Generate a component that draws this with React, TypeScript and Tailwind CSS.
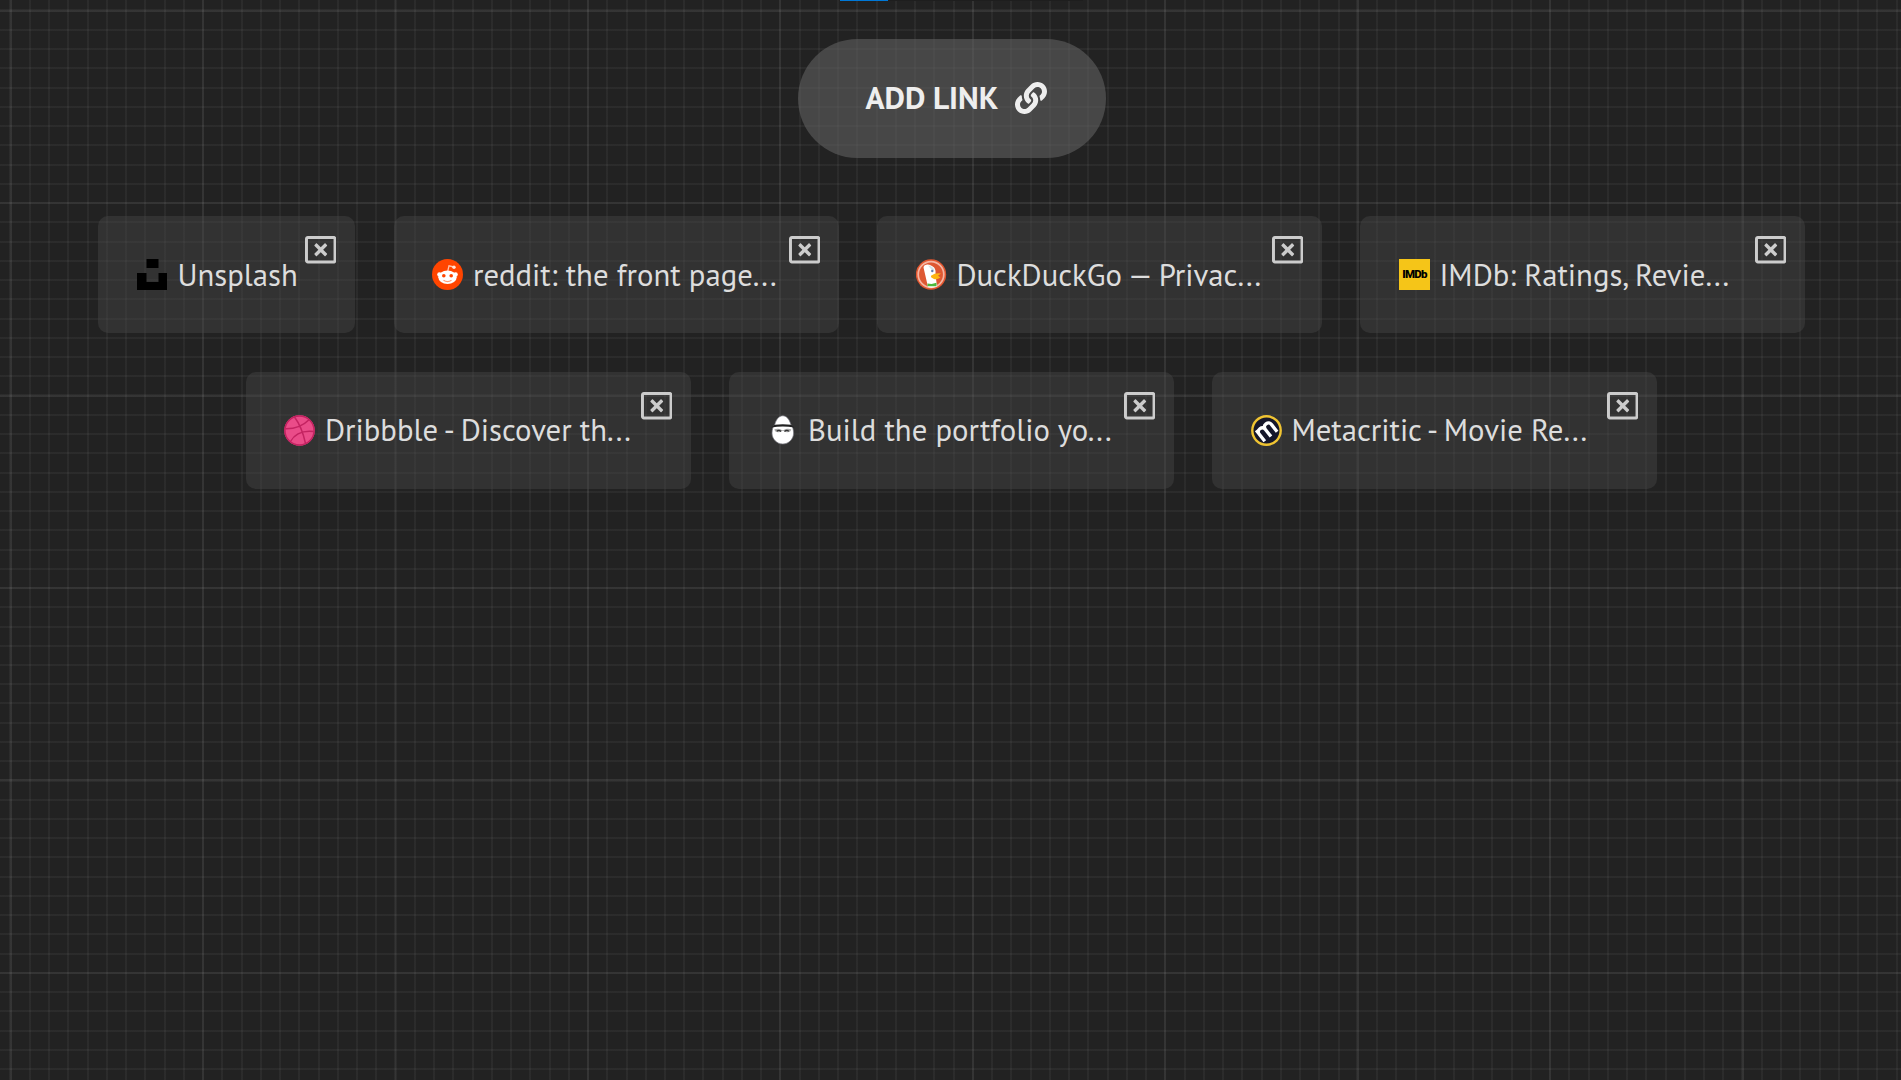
import type { ReactNode } from "react";
import { FaLink, FaRegWindowClose } from "react-icons/fa";

const iconClass = "block h-[31px] w-[31px] shrink-0";

const Unsplash = () => (
  <svg viewBox="0 0 31 31" className={iconClass}>
    <path d="M9.5 0h12v9h-12zM0 14h9.5v9h12v-9H30v17H0z" fill="#000" />
  </svg>
);

const Reddit = () => (
  <svg viewBox="0 0 31 31" className={iconClass}>
    <circle cx="15.5" cy="15.5" r="15.5" fill="#ff4500" />
    <path d="M15.8 12 17 6.8l5 1.2" fill="none" stroke="#ffc4ae" strokeWidth="1.3" />
    <circle cx="22" cy="8.2" r="1.7" fill="#ffe3d8" />
    <circle cx="7.4" cy="15.4" r="2.2" fill="#fff" />
    <circle cx="23.6" cy="15.4" r="2.2" fill="#fff" />
    <ellipse cx="15.5" cy="18.2" rx="9.2" ry="6.8" fill="#fff" />
    <circle cx="11.8" cy="16.8" r="1.8" fill="#ff4500" />
    <circle cx="19.2" cy="16.8" r="1.8" fill="#ff4500" />
    <path d="M11.5 21.3q4 2.6 8 0" fill="none" stroke="#ff9d79" strokeWidth="1.3" />
  </svg>
);

const DuckDuckGo = () => (
  <svg viewBox="0 0 31 31" className={iconClass}>
    <circle cx="15" cy="15.5" r="15.2" fill="#e2562f" />
    <circle cx="15" cy="15.5" r="12.8" fill="#de5833" stroke="#f5b5a2" strokeWidth="1.7" />
    <path d="M7.5 8.5C8 5 12.5 5 15 6.5c4 1.5 5 4.5 4.5 9l1.5 12q-5 2-9 .5z" fill="#fff" />
    <path d="M12 6.5q4 0 6.5 4.5l-2 1z" fill="#d5e4e8" />
    <circle cx="16.3" cy="12" r="1.2" fill="#5f7fae" />
    <path d="M15 16.8q4-3 10-2.3l-3 2.2 2.5 1.8q-4 2.8-7 1.2-3-1-2.5-2.9" fill="#fdb512" />
    <path d="m11.5 24.5 4 .6 5-1.3v3.4h-9z" fill="#4cba3c" />
  </svg>
);

const Imdb = () => (
  <span className="flex h-[31px] w-[31px] shrink-0 items-center justify-center bg-[#f5c518] font-['Roboto',sans-serif] text-[11.5px] leading-none font-black tracking-[-0.7px] text-black">
    IMDb
  </span>
);

const Dribbble = () => (
  <svg viewBox="0 0 31 31" className={iconClass}>
    <circle cx="15.5" cy="15.5" r="15.2" fill="#ea4c89" />
    <g fill="none" stroke="#c32361" strokeWidth="1.5">
      <circle cx="15.5" cy="15.5" r="14.6" />
      <path d="M10.5 2q7.5 10 11 26.5M1.5 13.8Q16 14 25 4.8M6.5 26.5Q13 14.8 29.5 16.5" />
    </g>
  </svg>
);

const Portfolio = () => (
  <svg viewBox="-1.8 0 31 31" className={iconClass}>
    <path d="M14 .8c4 0 6.5 3.7 7.9 8.2 2 2.5 2.8 6 2.9 9 0 6-4.8 11-10.8 11S3.2 24 3.2 18c.1-3 .9-6.5 2.9-9C7.5 4.5 10 .8 14 .8" fill="#fff" stroke="#77777f" strokeWidth=".7" />
    <path d="M5.5 9.8q8.5-1.3 17 0l3 2.7q-11.5-2-23 0z" fill="#222" />
    <path d="M5.5 14.3q4.5-1.6 7.5.8h2q3-2.400 7.500-.8-.5 3-3.800 3-2.700 0-4-1.600h-1.400q-1.300 1.600-4 1.600-3.300 0-3.800-3" fill="#aaa" />
    <path d="M8 16.2q2-1.8 4.3.2M15.7 16.4q2.3-2 4.3-.2" fill="none" stroke="#333" strokeWidth="1.3" />
  </svg>
);

const Metacritic = () => (
  <svg viewBox="0 0 31 31" className={iconClass}>
    <circle cx="15.5" cy="15.5" r="14.2" fill="#16172a" stroke="#f0c432" strokeWidth="2.4" />
    <g transform="rotate(-38 15.5 15.5)" fill="none" stroke="#fff" strokeWidth="3.3">
      <path d="M7.5 23V9M7.5 23V14q0-4 3.9-4t3.9 4v9M15.3 23V14q0-4 3.9-4t3.9 4v9" />
    </g>
  </svg>
);

type Link = { title: string; icon: ReactNode; size: string; titleClass?: string };

const WIDE = "w-[445px] gap-[9.4px] pl-[39px]";
const WIDE_TIGHT = "w-[445px] gap-[10px] pl-[38px]";

const rows: Link[][] = [
  [
    { title: "Unsplash", icon: <Unsplash />, size: "mr-px w-[257px] gap-[9.4px] pl-[39px]" },
    { title: "reddit: the front page...", icon: <Reddit />, size: WIDE_TIGHT },
    { title: "DuckDuckGo — Privac...", icon: <DuckDuckGo />, size: WIDE },
    { title: "IMDb: Ratings, Revie...", icon: <Imdb />, size: WIDE },
  ],
  [
    { title: "Dribbble - Discover th...", icon: <Dribbble />, size: WIDE_TIGHT, titleClass: "pb-[2px]" },
    { title: "Build the portfolio yo...", icon: <Portfolio />, size: WIDE_TIGHT, titleClass: "pb-[2px]" },
    { title: "Metacritic - Movie Re...", icon: <Metacritic />, size: WIDE, titleClass: "pb-[2px]" },
  ],
];

function Card({ title, icon, size, titleClass = "" }: Link) {
  return (
    <div className={`relative flex h-[117px] items-center rounded-[10px] bg-[rgba(76,76,76,0.4)] ${size}`}>
      {icon}
      <span className={`text-[30.72px] leading-[40px] whitespace-nowrap text-[#ddd] ${titleClass}`}>{title}</span>
      <button aria-label="Remove" className="absolute top-[17.5px] right-[18.8px] text-[31.5px] text-[#ccc]">
        <FaRegWindowClose />
      </button>
    </div>
  );
}

export default function App() {
  return (
    <div className="h-[1080px] w-full overflow-hidden bg-[#222] bg-[repeating-linear-gradient(to_right,transparent_0_9.7px,rgba(255,255,255,0.045)_9.7px_11.7px,transparent_11.7px_19.244px),repeating-linear-gradient(to_bottom,transparent_0_9.7px,rgba(255,255,255,0.045)_9.7px_11.7px,transparent_11.7px_19.244px),repeating-linear-gradient(to_right,transparent_0_9.3px,rgba(255,255,255,0.045)_9.3px_11.6px,transparent_11.6px_192.44px),repeating-linear-gradient(to_bottom,transparent_0_9.4px,rgba(255,255,255,0.045)_9.4px_11.8px,transparent_11.8px_192.44px)] font-['PT_Sans','Noto_Sans',sans-serif]">
      <div className="flex h-px pl-[840px]">
        <div className="w-12 bg-[#0078d7]" />
        <div className="w-[195px] bg-[#1e1e1e]" />
      </div>
      <div className="flex flex-col items-center gap-[39px] pt-[38px] pl-[2px]">
        <button className="mb-[19px] flex h-[119px] w-[308px] items-center gap-[17px] rounded-full bg-[rgba(97,97,97,0.6)] pb-[2px] pl-[68px] text-[#eee]">
          <span className="text-[31.5px] leading-[40px] font-bold whitespace-nowrap">ADD LINK</span>
          <FaLink className="text-[32px]" />
        </button>
        {rows.map((row, i) => (
          <div key={i} className="flex gap-[38px]">
            {row.map((link) => (
              <Card key={link.title} {...link} />
            ))}
          </div>
        ))}
      </div>
    </div>
  );
}
